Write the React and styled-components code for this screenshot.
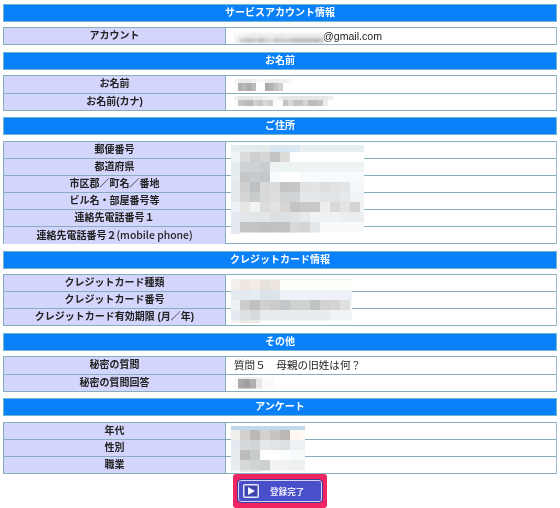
import styled, { createGlobalStyle } from "styled-components";

const GlobalStyle = createGlobalStyle`
  body {
    margin: 0;
    background: #fff;
    font-family: "Liberation Sans", "Noto Sans CJK JP", sans-serif;
    color: #222;
  }
`;

const Page = styled.div`
  width: 560px;
  height: 508px;
  overflow: hidden;
  box-sizing: border-box;
  padding: 4px 3px 0;
  display: flex;
  flex-direction: column;
  gap: 6.6px;
  filter: blur(0.25px);
`;
const Section = styled.section`
  display: flex;
  flex-direction: column;
  gap: 5.4px;
`;
const SectionTitle = styled.h2`
  margin: 0;
  height: 18px;
  box-sizing: border-box;
  background: #0a80fa;
  border: 1px solid #6fb6cf;
  color: #fff;
  font-size: 10px;
  font-weight: 700;
  line-height: 16px;
  text-align: center;
`;
const Table = styled.div`
  position: relative;
  border-top: 1px solid #86aebd;
  border-left: 1px solid #86aebd;
  border-right: 1px solid #9dbcc8;
`;
const Row = styled.div`
  display: grid;
  grid-template-columns: 222px 1fr;
  height: 17.1px;
  box-sizing: border-box;
  border-bottom: 1px solid #86aebd;
`;
const Label = styled.div`
  background: #d4d5fc;
  border-right: 1px solid #86aebd;
  font-size: 10px;
  font-weight: 700;
  line-height: 16px;
  text-align: center;
  white-space: nowrap;
`;
const LatinPart = styled.span`
  font-family: "Noto Sans CJK JP", sans-serif;
  font-size: 10.4px;
  font-weight: 500;
`;
const Value = styled.div`
  padding-left: 8px;
  font-size: 10.6px;
  line-height: 16px;
  white-space: nowrap;
`;
const AccountValue = styled(Value)`
  padding-left: 97px;
`;
const MosaicSvg = styled.svg`
  position: absolute;
  left: ${({ $x }) => $x}px;
  top: ${({ $y }) => $y}px;
  overflow: hidden;
  filter: blur(${({ $blur }) => $blur}px);
`;
const ButtonBar = styled.div`
  display: flex;
  justify-content: center;
  margin-top: -6.6px;
`;
const Highlight = styled.div`
  width: 94px;
  height: 34px;
  box-sizing: border-box;
  padding: 6px 5px;
  background: #ee2560;
  border-radius: 3px;
`;
const SubmitButton = styled.button`
  width: 84px;
  height: 22px;
  padding: 0 0 0 4px;
  display: flex;
  align-items: center;
  gap: 11px;
  box-sizing: border-box;
  background: #484fc9;
  border: 1px solid #d5d6f4;
  outline: 1px solid #3a3f9e;
  border-radius: 3px;
  color: #e8e9ff;
  font-family: inherit;
  font-size: 8.6px;
  font-weight: 700;
`;

// a pixelated patch over personal data: rows of cell colours, clipped to w x h
function Mosaic({ x, y, w, h, cell = 10, first = 9, rowH = 10, firstRow = 7, blur = 0.5, rows }) {
  const rects = [];
  let top = 0;
  rows.forEach((line, r) => {
    const height = r === 0 ? firstRow : rowH;
    let left = 0;
    line.split(" ").forEach((c, i) => {
      const width = i === 0 ? first : cell;
      rects.push(<rect key={r + "-" + i} x={left} y={top} width={width + 0.5} height={height + 0.5} fill={"#" + c} />);
      left += width;
    });
    top += height;
  });
  return (
    <MosaicSvg $x={x} $y={y} $blur={blur} width={w} height={h} aria-hidden="true">
      {rects}
    </MosaicSvg>
  );
}

const accountBlur = [
  "f8f8f8 f6f6f6 eeeeee eeeeee ececec ececec eeeeee eeeeee ececec ececec eeeeee ececec ececec ececec ececec ececec ececec ececec",
  "f0f0f0 d0d2d4 c6c8ca c4c7c9 ced0d2 bec0c4 d0d2d6 dcdee0 c4c7c9 cacdd0 ced0d6 c6c8ca bec0c4 c0c3c6 bec0c4 c0c3c6 babcc0 c6c8ca",
];
const nameBlur = [
  "f4f4f4 ececec ececec ececec f0f0f0 f8f8f8 f8f8f8 f0f0f0 ececec ececec f0f0f0 f0f0f0 f4f4f4",
  "fcfcfc b0b0b0 b8b8b8 acacac bcbcbc ffffff ffffff acacac b4b4b4 c4c4c4 d0d0d0 ffffff ffffff",
];
const kanaBlur = [
  "f0f0f0 e6e6e6 e6e6e6 e6e6e6 ececec ececec f0f0f0 f4f4f4 f4f4f4 ececec e6e6e6 e6e6e6 e6e6e6 e6e6e6 e6e6e6 e6e6e6 e6e6e6 e6e6e6 e6e6e6 f0f0f0",
  "fcfcfc c4c4c4 bcbcbc b8b8b8 cecece c8c8c8 d8d8d8 cecece fcfcfc fcfcfc c4c4c4 d8d8d8 c4c4c4 c4c4c4 d4d4d4 bcbcbc bcbcbc c4c4c4 ececec ffffff",
];
const addressBlur = [
  "e6eef0 e4ecee e2eaec e2eaec d8e6f0 d8e6f2 dae8f2 e8eff2 e8eff2 e8eff2 e8eff2 e8eff2 e8eff2 e8eff2",
  "eef3f5 dcdcdc cfcfcf d6d6d6 c4c4c4 dedcd8 ffffff ffffff ffffff ffffff ffffff ffffff ffffff ffffff",
  "e4ecf0 cdd2d4 cdd2d4 c8cdd0 eef3f4 eef3f4 eef3f4 eef3f4 eef3f4 eef3f4 eef3f4 eef3f4 eef3f4 eef3f4",
  "e6ecf0 c4c6c8 c8cacc c4c8ca f8fbfd ffffff ffffff f8fbfd f8fbfd f8fbfd f8fbfd f8fbfd f8fbfd f8fbfd",
  "e4e9ee cfcfcf bcc0c2 d8d8d8 dcdcdc c4c4c6 c4c6c8 e0e2e4 e2e4e6 dcdee0 e0e2e4 e2e4e6 f4f7f9 f4f7f9",
  "e4e9ee d4d6d6 c8cccc d8dada dcdede d0d4d4 d0d4d6 e4e8ec e4e8ec e0e4e8 e0e4e8 e6e8ec f0f4f6 f0f4f6",
  "eef2f6 e6e6e4 f2f4f4 dcdcdc e2e2e2 d8d6d4 c4c4c4 c8c8c8 c8c8c8 eeeeee d8d8d8 e4e4e4 d4d4d4 f0f4f6",
  "e4eaf0 e4e8ea e2e6e8 e2e6e8 dce0e2 dce0e2 e0e4e6 e6eaec f0f2f4 eef2f4 eef2f4 eaeef0 eaeef0 eaeef0",
  "e4eaf0 c4c4c4 c4c4c4 c0c0c0 c2c2c2 c2c2c2 d8d8d8 d4d4d4 e4e8ea f8fafc f8fafc f8fafc f8fafc f8fafc",
  "e4eaf0",
];
const cardBlur = [
  "e8f0f0 e8f0f0 e8f0f0 e8f0f0 e8f0f0 e8f0f0 e8f0f0 e8f0f0 e8f0f0 e8f0f0 e8f0f0 e8f0f0 e8f0f0",
  "f3f0ec f0e8e0 f3ece6 e8e2dc ece4de fffffa fffffa fffffa fffffa fffffa fffffa fffffa fffffa",
  "e4eaf0 e4eaf0 e6ecf0 dce2e8 dde3e8 eef2f6 eef2f6 eef2f6 eef2f6 eef2f6 eef2f6 eef2f6 eef2f6",
  "eef0f4 cccccc c0c0c0 d0d0d0 cccccc c4c6c8 d0d2d2 cfd1d1 c0c2c2 d2d2d2 d4d4d4 e0e0e0 f4f6f8",
  "e4eaf0 dde0e4 d4dade e8ecf0 e8ecf0 e8ecf0 e8ecf0 e8ecf0 e8ecf0 e8ecf0 f0f4f6 f0f4f6 f0f4f6",
  "f2f4f4 e8e8e4 ecece8",
];
const surveyBlur = [
  "bfd9ec bfd9ec bfd9ec bfd9ec bfd9ec bfd9ec bfd9ec bfd9ec",
  "f0eeea d4d0cc bcb8b4 d4d0cc c8c4c0 bcb8b4 fff8f0 fffaf4",
  "e4eaf0 d4dadc d0d6d8 e4e8ec e0e4e8 dce0e4 eef2f4 eef2f4",
  "e6ecf0 bcbcbc c8cacc ffffff ffffff fcfdfd f8fbfb f8fafa",
  "e6ecf0 d4d8d8 d0d4d4 ccd0d0 f0f2f4 f0f2f4 eef0f2 eef0f2",
  "f4f6f8 e8e8e8 e8e8e8",
];
const answerBlur = [
  "f8f8f8 f0f0f0 f0f0f0 f0f0f0 f4f4f4 fafafa fafafa",
  "fafafa a8a8a8 a0a0a0 b0b0b0 e8e8e8 fafafa fafafa",
];

function PlayIcon() {
  return (
    <svg width="16" height="14" viewBox="0 0 16 14">
      <rect x="0.75" y="0.75" width="14.5" height="12.5" rx="1" fill="#3d44ad" stroke="#e4e5fa" strokeWidth="1.5" />
      <path d="M5 3l7 4-7 4z" fill="#f2f3ff" />
    </svg>
  );
}

export default function App() {
  return (
    <>
      <GlobalStyle />
      <Page>
        <Section>
          <SectionTitle>サービスアカウント情報</SectionTitle>
          <Table>
            <Row><Label>アカウント</Label><AccountValue>@gmail.com</AccountValue></Row>
            <Mosaic x={230} y={5} w={90} h={10} cell={5} first={5} rowH={5} firstRow={5} blur={0.9} rows={accountBlur} />
          </Table>
        </Section>
        <Section>
          <SectionTitle>お名前</SectionTitle>
          <Table>
            <Row><Label>お名前</Label><Value /></Row>
            <Row><Label>お名前(カナ)</Label><Value /></Row>
            <Mosaic x={230} y={3} w={58} h={12} cell={4.5} first={4} rowH={8} firstRow={4} blur={0.7} rows={nameBlur} />
            <Mosaic x={230} y={20} w={100} h={10} cell={5} first={4} rowH={6} firstRow={4} blur={0.7} rows={kanaBlur} />
          </Table>
        </Section>
        <Section>
          <SectionTitle>ご住所</SectionTitle>
          <Table>
            <Row><Label>郵便番号</Label><Value /></Row>
            <Row><Label>都道府県</Label><Value /></Row>
            <Row><Label>市区郡／町名／番地</Label><Value /></Row>
            <Row><Label>ビル名・部屋番号等</Label><Value /></Row>
            <Row><Label>連絡先電話番号１</Label><Value /></Row>
            <Row><Label>連絡先電話番号２<LatinPart>(mobile phone)</LatinPart></Label><Value /></Row>
            <Mosaic x={227} y={3} w={133} h={89} rows={addressBlur} />
          </Table>
        </Section>
        <Section>
          <SectionTitle>クレジットカード情報</SectionTitle>
          <Table>
            <Row><Label>クレジットカード種類</Label><Value /></Row>
            <Row><Label>クレジットカード番号</Label><Value /></Row>
            <Row><Label>クレジットカード有効期限 (月／年)</Label><Value /></Row>
            <Mosaic x={227} y={4} w={121} h={44} firstRow={1} rows={cardBlur} />
          </Table>
        </Section>
        <Section>
          <SectionTitle>その他</SectionTitle>
          <Table>
            <Row><Label>秘密の質問</Label><Value>質問５　母親の旧姓は何？</Value></Row>
            <Row><Label>秘密の質問回答</Label><Value /></Row>
            <Mosaic x={230} y={20} w={40} h={12} cell={6} first={4} rowH={9} firstRow={2} blur={0.7} rows={answerBlur} />
          </Table>
        </Section>
        <Section>
          <SectionTitle>アンケート</SectionTitle>
          <Table>
            <Row><Label>年代</Label><Value /></Row>
            <Row><Label>性別</Label><Value /></Row>
            <Row><Label>職業</Label><Value /></Row>
            <Mosaic x={227} y={3} w={74} h={46} firstRow={4} rows={surveyBlur} />
          </Table>
        </Section>
        <ButtonBar>
          <Highlight>
            <SubmitButton type="button">
              <PlayIcon />
              登録完了
            </SubmitButton>
          </Highlight>
        </ButtonBar>
      </Page>
    </>
  );
}
